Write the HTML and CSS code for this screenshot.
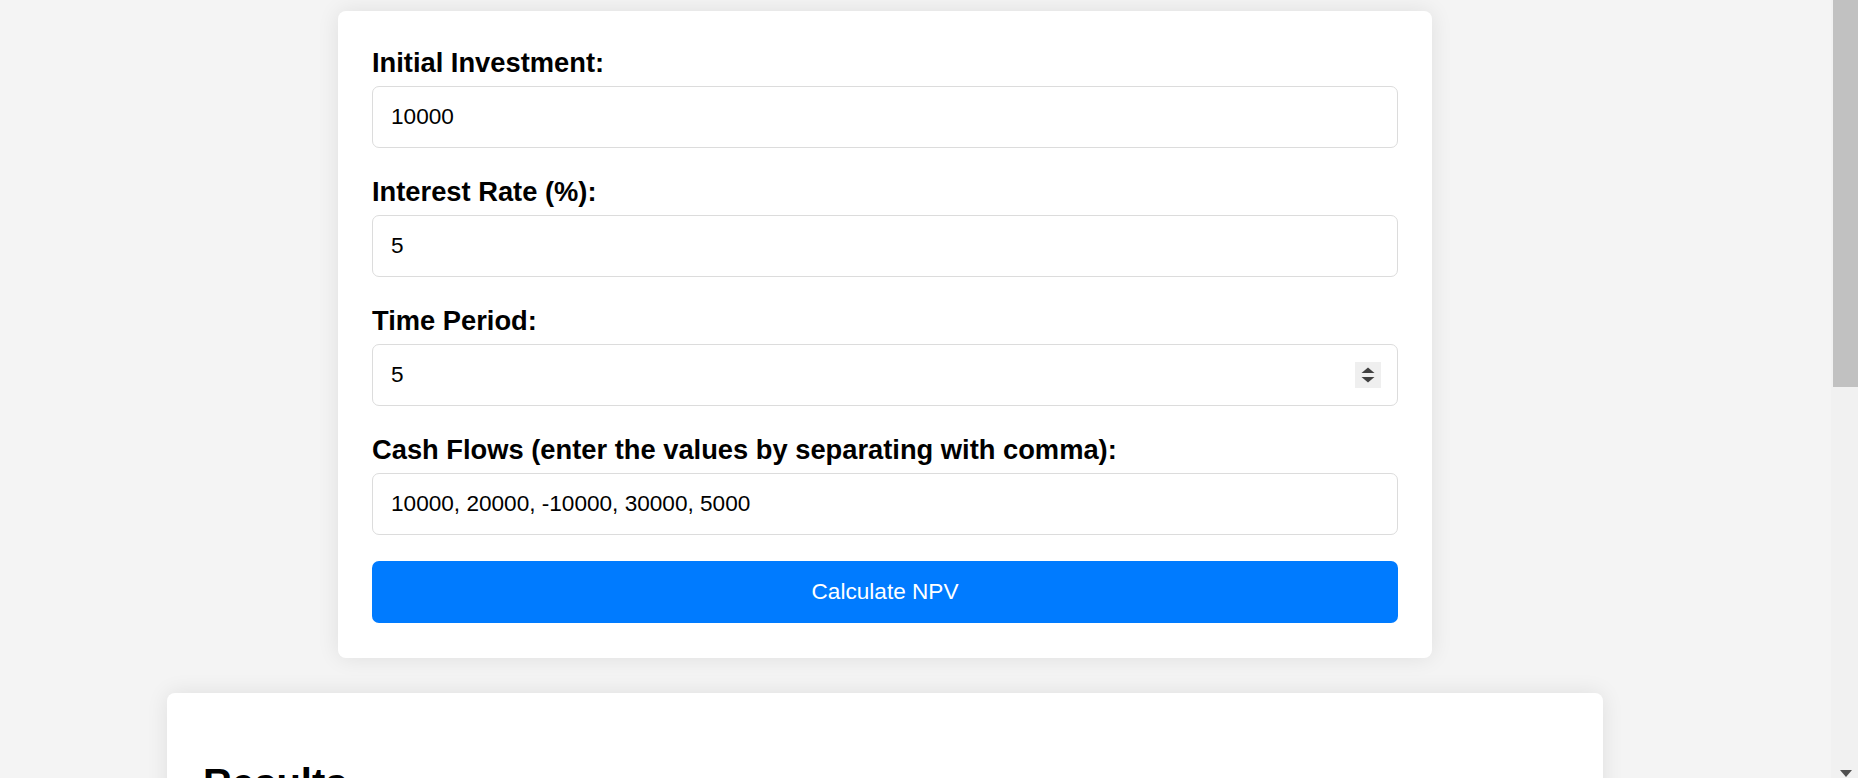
FILE: index.html
```html
<!DOCTYPE html>
<html lang="en">
<head>
<meta charset="utf-8">
<title>NPV Calculator</title>
<link rel="stylesheet" href="styles.css">
</head>
<body>
<div class="screen">
  <main class="viewport">
    <div class="page">
      <form class="card calc">
        <div class="field">
          <label class="label" for="inv">Initial Investment:</label>
          <input class="input" id="inv" type="text" value="10000">
        </div>
        <div class="field">
          <label class="label" for="rate">Interest Rate (%):</label>
          <input class="input" id="rate" type="text" value="5">
        </div>
        <div class="field">
          <label class="label" for="period">Time Period:</label>
          <div class="input-box">
            <input class="input-inner" id="period" type="text" value="5">
            <span class="spinner">
              <svg width="26" height="26" viewBox="0 0 26 26">
                <rect width="26" height="26" fill="#efefef"/>
                <polygon points="6.5,11 19.5,11 13,5.5" fill="#414141"/>
                <polygon points="6.5,15 19.5,15 13,20.5" fill="#414141"/>
              </svg>
            </span>
          </div>
        </div>
        <div class="field">
          <label class="label" for="flows">Cash Flows (enter the values by separating with comma):</label>
          <input class="input" id="flows" type="text" value="10000, 20000, -10000, 30000, 5000">
        </div>
        <button class="btn" type="button">Calculate NPV</button>
      </form>
      <section class="card results">
        <h2 class="results-title">Results</h2>
        <p class="results-text">Net Present Value</p>
      </section>
    </div>
  </main>
  <div class="scrollbar">
    <div class="thumb"></div>
    <div class="track"></div>
    <div class="arrow-down"></div>
  </div>
</div>
</body>
</html>
```

FILE: styles.css
```css
html, body {
  margin: 0;
  padding: 0;
  height: 778px;
  overflow: hidden;
}

body {
  background: #f4f4f4;
  font-family: "Liberation Sans", Arial, sans-serif;
  color: #000;
}

.screen {
  display: flex;
  height: 778px;
  overflow: hidden;
}

.viewport {
  flex: 1;
  overflow: hidden;
}

.page {
  width: 1770px;
  padding-top: 11px;
}

.card {
  background: #fff;
  border-radius: 8px;
  box-shadow: 0 0 22px rgba(0, 0, 0, 0.09);
  box-sizing: border-box;
  margin: 0 auto;
}

.calc {
  width: 1094px;
  padding: 34px 34px 35px;
}

.field {
  margin-bottom: 26px;
}

.label {
  display: block;
  font-weight: 700;
  font-size: 27.3px;
  line-height: 31px;
  padding-top: 2px;
  margin-bottom: 8px;
}

.input,
.input-box {
  display: block;
  width: 100%;
  height: 62px;
  box-sizing: border-box;
  border: 1px solid #dcdcdc;
  border-radius: 7px;
  background: #fff;
}

.input {
  padding: 0 18px;
  font-family: "Liberation Sans", Arial, sans-serif;
  font-size: 22.6px;
  color: #000;
  outline: none;
}

.input-box {
  display: flex;
  align-items: center;
  padding: 0 16px 0 18px;
}

.input-inner {
  flex: 1;
  border: none;
  padding: 0;
  height: 100%;
  font-family: "Liberation Sans", Arial, sans-serif;
  font-size: 22.6px;
  color: #000;
  outline: none;
  background: transparent;
}

.spinner {
  display: flex;
  width: 26px;
  height: 26px;
}

.btn {
  display: block;
  width: 100%;
  height: 62px;
  border: none;
  border-radius: 7px;
  background: #007bff;
  color: #fff;
  font-family: "Liberation Sans", Arial, sans-serif;
  font-size: 22.6px;
  cursor: pointer;
}

.results {
  width: 1436px;
  margin-top: 35px;
  padding: 34px 36px;
}

.results-title {
  font-size: 40px;
  line-height: 46px;
  font-weight: 700;
  margin: 33px 0;
}

.results-text {
  font-size: 22.6px;
  margin: 0;
}

.scrollbar {
  width: 27px;
  display: flex;
  flex-direction: column;
  align-items: flex-end;
  background: #f1f1f1;
}

.thumb {
  width: 25px;
  height: 387px;
  background: #c1c1c1;
}

.track {
  flex: 0 0 383px;
}

.arrow-down {
  width: 0;
  height: 0;
  margin-right: 6px;
  border-left: 6.5px solid transparent;
  border-right: 6.5px solid transparent;
  border-top: 7px solid #505050;
}
```
